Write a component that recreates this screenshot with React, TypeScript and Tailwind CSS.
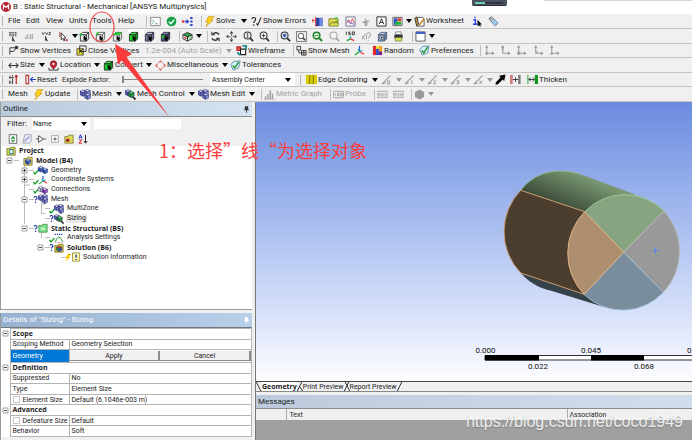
import type { ReactNode } from "react";
import clsx from "clsx";

/* ICONS – all drawn on a 12 x 12 grid */
const cube = (front: string, side: string, top: string, stroke = "#222") => (
  <g stroke={stroke} strokeWidth="0.9" strokeLinejoin="round">
    <path d="M1.5 4h6.5v7H1.5z" fill={front} />
    <path d="M1.5 4 4 1.5h6.5L8 4z" fill={top} />
    <path d="M8 4l2.5-2.5v7L8 11z" fill={side} />
  </g>
);

const pointer = <path d="M5 4.5v6l1.4-1.3 1 2 1-.5-.9-2h1.7z" fill="#000" />;

const hexCube = (x: number, y: number, top = "#c9cdf5", left = "#5b64c0", right = "#8f97e0") => (
  <g transform={`translate(${x} ${y})`} stroke="#23275e" strokeWidth="0.6" strokeLinejoin="round">
    <path d="M3.2 0 6.4 1.6 3.2 3.2 0 1.6z" fill={top} />
    <path d="M0 1.6 3.2 3.2v3.6L0 5.2z" fill={left} />
    <path d="M6.4 1.6 3.2 3.2v3.6l3.2-1.6z" fill={right} />
  </g>
);

const lens = (stroke: string, fill: string, mark?: ReactNode) => (
  <g fill="none" stroke={stroke}>
    <circle cx="5" cy="5" r="3.8" fill={fill} strokeWidth="1.1" />
    <path d="M7.8 7.8 11 11" strokeWidth="2" />
    {mark}
  </g>
);

const triad = (
  <g fill="none" strokeWidth="1.3">
    <path d="M6 7V1" stroke="#2c50d8" />
    <path d="M6 7l5 3" stroke="#e33" />
    <path d="M6 7l-5 4" stroke="#1aa832" />
    <path d="M4.5 4.5 6 7l3-1" stroke="#19a7b8" />
  </g>
);

const axis = (dot: ReactNode) => (
  <g fill="none" stroke="#9a9a9a" strokeWidth="1.1">
    <path d="M3 1.5V9h7M1.7 3 3 1.2 4.3 3M8.7 7.6 10.6 9l-1.9 1.4" />
    {dot}
  </g>
);

const edge = (mark: string) => (
  <g fill="none" stroke="#9b9b9b" strokeWidth="1.2">
    <path d="M1 11 10.5 1.5M1 11l4-1.4" />
    <path d={mark} strokeWidth="1" />
  </g>
);

const folder = (fill: string) => (
  <path d="M1 3h3.5l1-1.5H11V11H1z" fill={fill} stroke="#6b6420" strokeWidth="0.8" />
);

const icons: Record<string, ReactNode> = {
  console: (
    <g fill="none" stroke="#777" strokeWidth="0.9">
      <path d="M.8 1.5h10.4v9H.8z" fill="#fff" />
      <path d="M2.5 4 4.5 6l-2 2M5.5 8.5h3" stroke="#2a8a8a" />
    </g>
  ),
  check: (
    <g>
      <circle cx="6" cy="6" r="5.3" fill="#17a24a" />
      <path d="M3.2 6.2 5.3 8.3 9 4" fill="none" stroke="#fff" strokeWidth="1.6" />
    </g>
  ),
  arrows: (
    <g fill="#2743d2">
      <path d="M0 4.800h2.500v2.400H0z" fill="#d22" />
      <path d="M3 5.300h2V3.200L8 6 5 8.800V6.700H3z" />
      <path d="M9 1h2.500v2.200H9zM9 4.900h2.500v2.200H9zM9 8.800h2.500V11H9z" />
    </g>
  ),
  bolt: <path d="M5 .5h6L7.5 4.4H10L2 11.6l2.3-5H1.8z" fill="#ffd21c" stroke="#b88a00" strokeWidth="0.6" />,
  errors: (
    <g fill="none" stroke="#222" strokeWidth="1.2">
      <path d="M1 3.5C1 1 5 1 5 3.5 5 5.5 3 5.5 3 7.5M3 9v1.5M6 8l1.3 2L11 1.5" />
    </g>
  ),
  section: (
    <g>
      <path d="M4 2h7.5v9H4z" fill="#2742a6" />
      <path d="M8 2h3.5v9H8z" fill="#6f8be0" />
      <path d="M4 1v10.5M1 3v4M0 5h3" stroke="#d33" strokeWidth="1" />
    </g>
  ),
  image: (
    <g>
      <path d="M1 3h10v8H1z" fill="#e9e04c" stroke="#5c6b26" strokeWidth="0.8" />
      <path d="M2 9.5 5 6l2 2 2-2.5 1.5 3" fill="none" stroke="#3a5a2a" />
      <circle cx="9" cy="2.8" r="1.8" fill="#6bc04a" />
    </g>
  ),
  chart: (
    <g fill="none" strokeWidth="0.9">
      <path d="M1 1h10v10H1z" fill="#f7f7ff" stroke="#667" />
      <path d="M2 8 4 4l2 4 2-5 2 5" stroke="#d44" />
      <path d="M2 4.5l3 3L10 9" stroke="#4468d8" />
    </g>
  ),
  spark: <path d="M6 2 7 5h4L8 7v4H5V8L1.5 7 5 5.5z" fill="#a4a4a4" />,
  letter: (
    <g fill="none" stroke="#222" strokeWidth="1">
      <path d="M1 1h10v10H1z" fill="#fff" />
      <path d="M3.5 9 6 3l2.5 6M4.5 7h3" />
    </g>
  ),
  picture: (
    <g>
      <path d="M1 1.5h10v9H1z" fill="#fff" stroke="#333" strokeWidth="0.8" />
      <path d="M2 2.5h4v7H2z" fill="#2c59d0" />
      <path d="M6 2.5h4v3H6z" fill="#e23a2a" />
      <path d="M4 6h6v3.5H3z" fill="#27b03a" />
    </g>
  ),
  worksheet: (
    <g fill="none" strokeWidth="1">
      <path d="M4 1.5h5.5l1.5 2V11H3z" fill="#fff" stroke="#555" />
      <path d="M.8 2.5 3 1l2 8-2 2z" fill="#c99a4a" stroke="#333" />
      <path d="M5.5 10 11 3" stroke="#c07a1a" strokeWidth="1.5" />
    </g>
  ),
  info: (
    <g>
      <path d="M1.5 4h2.2v5M1 9h4.5" fill="none" stroke="#2a3df0" strokeWidth="1.6" />
      <path d="M2.5.8h1.5v1.5H2.5z" fill="#2a3df0" />
      <path d="M6 4v7.2l1.7-1.5 1 2 1-.5-.9-2h2z" fill="#000" />
    </g>
  ),
  tag: (
    <g strokeWidth="0.8">
      <path d="M1 3 4 1l7 6.5L8 11z" fill="#9ccdf0" stroke="#667" />
      <path d="M1 3 4 1l2 2-2.8 2.6z" fill="#ddd" stroke="#777" />
      <circle cx="3" cy="3" r=".7" fill="#444" />
    </g>
  ),
  pickA: (
    <g fill="none" stroke="#333" strokeWidth="0.9">
      <path d="M1 2h9M1 4.5h9M2.5 1v5M5.5 1v5M8.5 1v5" strokeDasharray="1.4 .7" />
      <path d="M5 6v5l1.2-1 1 1.8" fill="#000" />
    </g>
  ),
  pickB: (
    <g fill="none" stroke="#aaa" strokeWidth="1">
      <path d="M1 8 4 4v5M1 8h3M6 5l4-1M7 3.5 6.5 9M9.5 3 9 9M6 7.5h4" />
    </g>
  ),
  pickC: (
    <g fill="none" stroke="#333" strokeWidth="0.9">
      <path d="M1 1.5 2.5 4 4 1.5M5 1.5 6.2 4 7.4 1.5M8.5 1.5h2L8.5 4h2" />
      <path d="M5 5.5v5l1.2-1 1 1.8" fill="#000" />
    </g>
  ),
  pickMode: (
    <g>
      <path d="M2 1v6" stroke="#c33" strokeWidth="1" />
      <path d="M3.500 2v7.500l1.700-1.400 1.200 2.600 1.100-.6-1.100-2.400h2.200z" fill="#fff" stroke="#222" strokeWidth="0.9" />
      <circle cx="9.5" cy="10" r="1.2" fill="#c33" />
    </g>
  ),
  cubeVertex: (
    <g>
      {cube("#ededed", "#ddd", "#fff")}
      <circle cx="1.8" cy="3.8" r="1.4" fill="#19c32d" />
      {pointer}
    </g>
  ),
  cubeEdge: (
    <g>
      {cube("#ededed", "#ddd", "#fff", "#555")}
      <path d="M1.5 4 4 1.5" stroke="#19c32d" strokeWidth="1.8" />
      {pointer}
    </g>
  ),
  cubeFace: (
    <g>
      {cube("#ededed", "#ddd", "#1fd52f", "#555")}
      <path d="M1 4 4 1.500h7L8.500 4z" fill="#1fd52f" />
      {pointer}
    </g>
  ),
  cubeBody: (
    <g>
      {cube("#18d52a", "#0c9c1b", "#35e646")}
      {pointer}
    </g>
  ),
  cubeNode: (
    <g>
      {cube("#8d93c8", "#656ba8", "#bcc0e6")}
      <path d="M1.5 6.5H8M1.5 9H8M4 4v7" stroke="#333" strokeWidth="0.5" />
      {pointer}
    </g>
  ),
  cubeElement: (
    <g>
      {cube("#50558a", "#3a3f70", "#7d84bb")}
      <path d="M2 4.5h3v3H2z" fill="#1cc52e" />
      {pointer}
    </g>
  ),
  cubeView: (
    <g strokeWidth="0.900" strokeLinejoin="round" stroke="#222">
      <path d="M1 4 6 1.500 11 4 6 6.500z" fill="#2ea445" />
      <path d="M1 4v4.500L6 11V6.500z" fill="#f4f4f4" />
      <path d="M11 4v4.500L6 11V6.500z" fill="#a5dfad" />
      <path d="M2.500 7 5 8.300" stroke="#c33" strokeWidth="1.600" />
    </g>
  ),
  rotate: (
    <g fill="none" stroke="#333" strokeWidth="1.5">
      <path d="M10 4A4.3 4.3 0 0 0 3 3.5M2 8a4.3 4.3 0 0 0 7 .5" />
      <path d="M2 .8v3.4h3.3M10 11.2V7.8H6.7" strokeWidth="1.1" />
    </g>
  ),
  pan: (
    <g fill="#333">
      <path d="M6 0 8 2.6H4zM6 12 4 9.4h4zM0 6l2.6-2v4zM12 6 9.4 8V4z" />
      <path d="M5.4 3.6h1.2v1.2H5.4zM5.4 7.2h1.2v1.2H5.4zM3.6 5.4h1.2v1.2H3.6zM7.2 5.4h1.2v1.2H7.2z" />
    </g>
  ),
  zoom: lens("#333", "#f8f8f8", <path d="M5 2.8v4.4M3.8 3.8 5 2.6l1.2 1.2M3.8 6.2 5 7.4l1.2-1.2" strokeWidth=".8" />),
  zoomIn: lens("#333", "#f8f8f8", <path d="M5 3v4M3 5h4" strokeWidth="1" />),
  zoomFit: lens("#333", "#c8d4e8", <circle cx="5" cy="5" r="1.6" fill="#3550a0" stroke="none" />),
  zoomBox: (
    <g>
      <path d="M.6.6h10.8v10.8H.6z" fill="none" stroke="#555" strokeWidth="0.8" />
      <g transform="translate(1.5 1.5) scale(.78)">{lens("#333", "#fff")}</g>
    </g>
  ),
  zoomPrev: (
    <g fill="none" stroke="#25822e">
      <circle cx="5" cy="5" r="3.600" fill="#e6ffe6" strokeWidth="1.700" />
      <path d="M7.800 7.800 11 11" strokeWidth="2.200" />
      <path d="M3 5h4" strokeWidth="1" />
    </g>
  ),
  zoomNext: lens("#a5a5a5", "#f4f4f4"),
  iso: (
    <g fill="none" strokeWidth="1">
      <path d="M1.5.8v3.4M5.8 1.2H4v1.3h1.8V4H3.8M8 1h2.2v3H8z" stroke="#222" strokeWidth="0.9" />
      <path d="M6 5.5v3" stroke="#19a7b8" strokeWidth="1.5" />
      <path d="M6 8.5 2 10.5" stroke="#1aa832" strokeWidth="1.5" />
      <path d="M6 8.5l4 2" stroke="#e33" strokeWidth="1.5" />
    </g>
  ),
  lookAt: (
    <g fill="none" stroke="#a5a5a5" strokeWidth="1.1">
      <path d="M1 9 5 3M1.5 5.5 4 9M6 3.5C8 1 11 2 10.5 4.5 10 6.5 8 6 8 8.5M8 10v1M6 4v5" />
    </g>
  ),
  eye: (
    <g>
      {cube("#8fa6d6", "#6f86bd", "#c5d2ee", "#456")}
      <circle cx="5.2" cy="7.4" r="2.2" fill="#fff" stroke="#223" strokeWidth="0.6" />
      <circle cx="5.2" cy="7.4" r="1" fill="#223" />
    </g>
  ),
  print: (
    <g>
      <path d="M3 1h6v3H3z" fill="#fff" stroke="#555" strokeWidth="0.7" />
      <path d="M1.5 4h9v4h-9z" fill="#333" />
      <path d="M2.5 7h7v4h-7z" fill="#d7e24a" stroke="#555" strokeWidth="0.6" />
    </g>
  ),
  window: (
    <g>
      <path d="M1 1h10v10H1z" fill="#fff" stroke="#444" strokeWidth="0.9" />
      <path d="M1 1h10v2.2H1z" fill="#3e5fc4" />
    </g>
  ),
  vertices: (
    <g fill="none" stroke="#333" strokeWidth="1">
      <path d="M2 10.5V3h7l-3 4H2" />
      <path d="M8 1.5h2.5V4H8z" fill="#333" />
    </g>
  ),
  closeVert: (
    <g>
      <path d="M1 4h7v7H1z" fill="#e8dc38" stroke="#333" strokeWidth="0.8" />
      <path d="M4 1h7v6H4z" fill="none" stroke="#333" strokeWidth="1" />
      <path d="M3 9l5-5M4 5l3 4" stroke="#222" />
    </g>
  ),
  wireframe: (
    <g fill="none" strokeWidth="1.2">
      <path d="M1 2h4v4H1z" stroke="#c22" fill="#d55" />
      <path d="M5 4.5h5.5v6H5z" stroke="#222" fill="#fff" />
      <path d="M7 1h4v4M1.5 8l3 3" stroke="#1b8c8c" strokeWidth="2" />
    </g>
  ),
  showMesh: (
    <g fill="none" stroke="#333" strokeWidth="1">
      <path d="M1 1.5h4v4H1zM6 6h5v5H6zM8.5 6v5M6 8.5h5M3 5.5v3h3" />
    </g>
  ),
  triad,
  random: (
    <g>
      <path d="M1 1h3.5v10H1z" fill="#e12a2a" />
      <path d="M4.5 4h3v7h-3z" fill="#2b46c8" />
      <path d="M7.5 1h3.5v6H7.5z" fill="#f1a31f" />
      <path d="M7.5 7h3.5v4H7.5z" fill="#7a1e8c" />
      <path d="M4.5 1h3v3h-3z" fill="#f4e22a" />
    </g>
  ),
  prefs: (
    <g fill="none">
      <path d="M4 1.5 11 1 9.5 8.5 3.5 11 .8 5z" fill="#dbeefa" stroke="#5d8cab" strokeWidth="1" />
      <path d="M3 6l2.2 2.5L9.5 2" stroke="#1f9a35" strokeWidth="1.6" />
    </g>
  ),
  axis1: axis(<circle cx="3" cy="9" r="1.2" />),
  axis2: axis(<path d="M3 1v5" strokeWidth="1.8" />),
  axis3: axis(<path d="M2 8h2v2H2z" fill="#9a9a9a" />),
  axis4: axis(<path d="M3 9l2-2" />),
  axis5: axis(<path d="M1.5 9.5h3" strokeWidth="1.8" />),
  size: <path d="M1 6h10M3.500 3.500 1 6l2.500 2.500M8.500 3.500 11 6 8.500 8.500" fill="none" stroke="#333" strokeWidth="1.1" />,
  location: (
    <g>
      <path d="M6 .8a3.600 3.600 0 0 1 3.500 3.600C9.500 7 6 10 6 10S2.500 7 2.500 4.400A3.600 3.600 0 0 1 6 .8z" fill="#c62335" stroke="#5a0d17" strokeWidth="0.7" />
      <circle cx="6" cy="4.300" r="1.200" fill="#fff" />
      <path d="M1 8.500v2.500h10V8.500" fill="none" stroke="#333" strokeWidth="1" />
    </g>
  ),
  misc: (
    <g fill="none" stroke="#e05a5a" strokeWidth="1.200">
      <path d="M4.500 2.500 6 1l1.500 1.500M9.500 4.500 11 6 9.500 7.500M7.500 9.500 6 11l-1.500-1.500M2.500 7.500 1 6l1.500-1.500" />
      <path d="M2.500 4.500 4 3M8 3l1.500 1.500M9.500 7.500 8 9M4 9 2.500 7.500" strokeWidth=".8" />
    </g>
  ),
  explode: (
    <g fill="none" strokeWidth="1">
      <path d="M2 2v3M2 7v4M5 1v2M5 5v6M1 4h5M4 9H1" stroke="#555" strokeWidth="1.200" />
      <path d="M9 11V2M7.500 3.500 9 1.500l1.500 2" stroke="#b22" strokeWidth="1.300" />
    </g>
  ),
  reset: (
    <g fill="none" strokeWidth="1.200">
      <path d="M1 1.500h3v9H1z" stroke="#b33" />
      <path d="M12 6H6M8.500 3.500 6 6l2.500 2.500" stroke="#2846c8" />
    </g>
  ),
  edgeColor: (
    <g>
      <path d="M0 1h12v10H0z" fill="#d6ca00" />
      <path d="M4 1v10M8 1v10" stroke="#8f8700" strokeWidth="1.300" />
    </g>
  ),
  edge0: edge("M7 7.500h2.500V11H7z"),
  edge1: edge("M8.500 7v4"),
  edge2: edge("M7 7.500h2.500L7 10.700h3"),
  edge3: edge("M7 7.300h2.500v3.500H7M7.500 9h2"),
  edgeX: edge("M7 7l3 4M10 7l-3 4"),
  arrowBlack: <path d="M11.500.5 10 7.500 8.300 6 3 11.500.5 11.500 1 9 6 3.700 4.500 2z" fill="#000" />,
  gapRed: (
    <g>
      <path d="M0 1h3v10H0z" fill="#cf7f7f" />
      <path d="M9 1h2.500v10H9z" fill="#777" />
      <path d="M3 6h6M6 3.500v5" stroke="#333" />
    </g>
  ),
  thicken: (
    <g>
      <path d="M1 1v10" stroke="#18a02b" strokeWidth="1" />
      <path d="M8.500 1H12v10H8.500z" fill="#0f9a1f" />
      <path d="M2 6h6M4 4 2 6l2 2M6.500 4l2 2-2 2" fill="none" stroke="#222" strokeWidth=".9" />
    </g>
  ),
  cubes: (
    <g>
      {hexCube(0, 1)}
      {hexCube(4.800, 0.300)}
      {hexCube(5.200, 4.500)}
    </g>
  ),
  meshGreen: (
    <g>
      {hexCube(0, 0.500)}
      {hexCube(3.500, 2.500, "#5fe06b", "#129421", "#23b533")}
      <path d="M8.500 8.500 11.500 11.500" stroke="#222" strokeWidth="1.800" />
    </g>
  ),
  graph: (
    <g fill="#a0a0a0">
      <path d="M0 10.500h12v1H0zM1 8h1.500v2.500H1zM3.500 5.500H5v5H3.500zM6 1.500h1.700v9H6zM8.500 5H10v5.500H8.500z" />
    </g>
  ),
  probe: (
    <g fill="none" stroke="#a0a0a0" strokeWidth="1">
      <path d="M1 2.500h10a1 1 0 0 1 .5 1v5a1 1 0 0 1-.5 1H1a1 1 0 0 1-.5-1v-5a1 1 0 0 1 .5-1z" />
      <path d="M2.500 4.500v3M5 4.500h1.500v3H5zM8.500 4.500H10v3H8.500z" />
    </g>
  ),
  max: (
    <g fill="none" stroke="#a0a0a0" strokeWidth="1">
      <path d="M0 2.500h12v6.500H0z" />
      <path d="M1.500 7.500v-3l1 1.500 1-1.500v3M5 7.500 6 4.300l1 3.200M8.500 4.500l2 3M10.500 4.500l-2 3" strokeWidth=".9" />
    </g>
  ),
  min: (
    <g fill="none" stroke="#a0a0a0" strokeWidth="1">
      <path d="M0 2.500h12v6.500H0z" />
      <path d="M1.500 7.500v-3l1 1.500 1-1.500v3M5.800 4.300v3.200M7.800 7.500v-3l2.200 3v-3" strokeWidth=".9" />
    </g>
  ),
  hex: <path d="M6 .5 11 3.200v5.600L6 11.500 1 8.800V3.200z" fill="#999" />,
  refresh: (
    <g fill="none" strokeWidth="1">
      <path d="M1.500.8h9v10.400h-9z" fill="#fff" stroke="#555" />
      <path d="M4 5.500 6 3.200l2 2.300M6 3.500V6M8 7 6 9.200 4 7" stroke="#1f9a35" strokeWidth="1.300" />
    </g>
  ),
  note: (
    <g fill="none" strokeWidth="1">
      <path d="M3.500.8h7.500v8L8.500 11H1z" fill="#eef" stroke="#99a" />
      <path d="M3 9 9 3" stroke="#8893c8" strokeWidth="1.500" />
    </g>
  ),
  branch: (
    <g fill="none" stroke="#444" strokeWidth="1">
      <path d="M0 6h3M3 2l6 4-6 4zM9 6h3" />
    </g>
  ),
  plus: (
    <g fill="none" stroke="#999" strokeWidth="1">
      <path d="M2 2h8v8H2z" fill="#fff" />
      <path d="M6 4v4M4 6h4" stroke="#444" />
    </g>
  ),
  folderRed: (
    <g>
      {folder("#dcd65c")}
      <circle cx="4.500" cy="7.500" r="2.200" fill="#a52222" />
    </g>
  ),
  sort: (
    <g fill="none" strokeWidth="1.200">
      <path d="M1 5.500 3 .8l2 4.700M1.700 4h2.600" stroke="#2742d0" />
      <path d="M1.200 7h3.500L1.200 11h3.700" stroke="#c22" />
      <path d="M9 1v9.500M7 8.500 9 11l2-2.500" stroke="#222" />
    </g>
  ),
  project: (
    <g>
      {folder("#d8cf4e")}
      <path d="M4 3.500h5V10H4z" fill="#2d8b8b" />
      <path d="M5 5h3v3.500H5z" fill="#fff" />
    </g>
  ),
  model: (
    <g>
      {folder("#e0d660")}
      {hexCube(2.800, 3.300, "#b8d4ff", "#2454b8", "#4d80dc")}
    </g>
  ),
  geometry: (
    <g>
      {hexCube(0, 1.500, "#b8d4ff", "#2454b8", "#4d80dc")}
      {hexCube(5.200, 3.500, "#b8d4ff", "#2454b8", "#4d80dc")}
    </g>
  ),
  connections: (
    <g>
      {hexCube(0, 1.500, "#fff", "#ddd", "#eee")}
      {hexCube(5, 3.500, "#f3d8f8", "#8e2aa8", "#c05ad6")}
    </g>
  ),
  structural: (
    <g>
      <path d="M1 3h3.500l1-1.500H11V11H1z" fill="#7fe08b" stroke="#2b7a35" strokeWidth="0.800" />
      <path d="M3.500 7h5" stroke="#fff" strokeWidth="1.300" />
    </g>
  ),
  analysis: (
    <g fill="none" strokeWidth="1">
      <path d="M1 1.500h10" stroke="#2a46c8" strokeDasharray="1.500 1" strokeWidth="1.500" />
      <path d="M1 10.500C3 10.500 3 5 6 5s3 5.500 5 5.500" stroke="#2a9a50" strokeWidth="1.200" />
      <path d="M1 11.500h10" stroke="#d55" strokeDasharray="1 1" />
    </g>
  ),
  solution: (
    <g>
      {folder("#e0c840")}
      {hexCube(3, 3.500, "#e33", "#1f9a35", "#2a52d0")}
    </g>
  ),
  solInfo: (
    <g>
      <path d="M3 1h8.500v10H3z" fill="#fff6a8" stroke="#7a6f20" strokeWidth="0.800" />
      <path d="M7.300 3v4M7.300 8.300v1.300" stroke="#2438c8" strokeWidth="1.600" />
    </g>
  ),
};

function Icon({ name, className = "size-[11px]" }: { name: string; className?: string }) {
  return (
    <svg viewBox="0 0 12 12" className={clsx("shrink-0", className)} aria-hidden="true">
      {icons[name]}
    </svg>
  );
}

function Caret({ dim = false }: { dim?: boolean }) {
  return (
    <svg viewBox="0 0 6 4" className={clsx("h-[4px] w-[6px] shrink-0", dim ? "fill-[#999]" : "fill-black")} aria-hidden="true">
      <path d="M0 0h6L3 4z" />
    </svg>
  );
}

/* TOOLBARS */
type Tool = {
  w: string;
  icon?: string;
  label?: string;
  caret?: boolean;
  dim?: boolean;
  sep?: boolean;
  on?: boolean;
};

const menuRow: Tool[] = [
  { w: "w-[18px]", label: "File" },
  { w: "w-[20px]", label: "Edit" },
  { w: "w-[23px]", label: "View" },
  { w: "w-[23px]", label: "Units" },
  { w: "w-[26px]", label: "Tools" },
  { w: "w-[24px]", label: "Help" },
  { w: "w-[8px]", sep: true },
  { w: "w-[16px]", icon: "console" },
  { w: "w-[16px]", icon: "check" },
  { w: "w-[16px]", icon: "arrows" },
  { w: "w-[6px]", sep: true },
  { w: "w-[47px]", icon: "bolt", label: "Solve", caret: true },
  { w: "w-[61px]", icon: "errors", label: "Show Errors" },
  { w: "w-[16px]", icon: "section" },
  { w: "w-[17px]", icon: "image" },
  { w: "w-[15px]", icon: "chart" },
  { w: "w-[16px]", icon: "spark" },
  { w: "w-[16px]", icon: "letter" },
  { w: "w-[22px]", icon: "picture", caret: true },
  { w: "w-[58px]", icon: "worksheet", label: "Worksheet" },
  { w: "w-[16px]", icon: "info" },
  { w: "w-[16px]", icon: "tag" },
];

const selectRow: Tool[] = [
  { w: "w-[16px]", icon: "pickA" },
  { w: "w-[17px]", icon: "pickB" },
  { w: "w-[17px]", icon: "pickC" },
  { w: "w-[21px]", icon: "pickMode", caret: true },
  { w: "w-[16px]", icon: "cubeVertex" },
  { w: "w-[17px]", icon: "cubeEdge" },
  { w: "w-[16px]", icon: "cubeFace" },
  { w: "w-[16px]", icon: "cubeBody", on: true },
  { w: "w-[16px]", icon: "cubeNode" },
  { w: "w-[16px]", icon: "cubeElement" },
  { w: "w-[6px]", sep: true },
  { w: "w-[22px]", icon: "cubeView", caret: true },
  { w: "w-[6px]", sep: true },
  { w: "w-[16px]", icon: "rotate" },
  { w: "w-[17px]", icon: "pan" },
  { w: "w-[16px]", icon: "zoom" },
  { w: "w-[15px]", icon: "zoomIn" },
  { w: "w-[6px]", sep: true },
  { w: "w-[16px]", icon: "zoomFit" },
  { w: "w-[16px]", icon: "zoomBox" },
  { w: "w-[17px]", icon: "zoomPrev" },
  { w: "w-[16px]", icon: "zoomNext" },
  { w: "w-[16px]", icon: "iso" },
  { w: "w-[16px]", icon: "lookAt" },
  { w: "w-[16px]", icon: "eye" },
  { w: "w-[16px]", icon: "print" },
  { w: "w-[6px]", sep: true },
  { w: "w-[22px]", icon: "window", caret: true },
];

const vertexRow: Tool[] = [
  { w: "w-[68px]", icon: "vertices", label: "Show Vertices" },
  { w: "w-[69px]", icon: "closeVert", label: "Close Vertices" },
  { w: "w-[91px]", label: "1.2e-004 (Auto Scale)", caret: true, dim: true },
  { w: "w-[54px]", icon: "wireframe", label: "Wireframe" },
  { w: "w-[6px]", sep: true },
  { w: "w-[58px]", icon: "showMesh", label: "Show Mesh" },
  { w: "w-[18px]", icon: "triad" },
  { w: "w-[47px]", icon: "random", label: "Random" },
  { w: "w-[58px]", icon: "prefs", label: "Preferences" },
  { w: "w-[7px]", sep: true },
  { w: "w-[16px]", icon: "axis1" },
  { w: "w-[16px]", icon: "axis2" },
  { w: "w-[17px]", icon: "axis3" },
  { w: "w-[16px]", icon: "axis4" },
  { w: "w-[16px]", icon: "axis5" },
];

const sizeRow: Tool[] = [
  { w: "w-[40px]", icon: "size", label: "Size", caret: true },
  { w: "w-[55px]", icon: "location", label: "Location", caret: true },
  { w: "w-[52px]", icon: "cubeBody", label: "Convert", caret: true },
  { w: "w-[75px]", icon: "misc", label: "Miscellaneous", caret: true },
  { w: "w-[54px]", icon: "prefs", label: "Tolerances" },
];

const edgeRow: Tool[] = [
  { w: "w-[75px]", icon: "edgeColor", label: "Edge Coloring", caret: true },
  { w: "w-[23px]", icon: "edge0", caret: true, dim: true },
  { w: "w-[23px]", icon: "edge1", caret: true, dim: true },
  { w: "w-[23px]", icon: "edge2", caret: true, dim: true },
  { w: "w-[23px]", icon: "edge3", caret: true, dim: true },
  { w: "w-[22px]", icon: "edgeX", caret: true, dim: true },
  { w: "w-[15px]", icon: "arrowBlack" },
  { w: "w-[17px]", icon: "gapRed" },
  { w: "w-[40px]", icon: "thicken", label: "Thicken" },
];

const meshRow: Tool[] = [
  { w: "w-[25px]", label: "Mesh" },
  { w: "w-[41px]", icon: "bolt", label: "Update" },
  { w: "w-[6px]", sep: true },
  { w: "w-[45px]", icon: "cubes", label: "Mesh", caret: true },
  { w: "w-[73px]", icon: "meshGreen", label: "Mesh Control", caret: true },
  { w: "w-[60px]", icon: "cubes", label: "Mesh Edit", caret: true },
  { w: "w-[6px]", sep: true },
  { w: "w-[63px]", icon: "graph", label: "Metric Graph", dim: true },
  { w: "w-[6px]", sep: true },
  { w: "w-[38px]", icon: "probe", label: "Probe", dim: true },
  { w: "w-[6px]", sep: true },
  { w: "w-[16px]", icon: "max", dim: true },
  { w: "w-[15px]", icon: "min", dim: true },
  { w: "w-[6px]", sep: true },
  { w: "w-[22px]", icon: "hex", caret: true, dim: true },
];

function Tools({ items }: { items: Tool[] }) {
  return (
    <>
      {items.map((t, i) =>
        t.sep ? (
          <span key={i} className={clsx("flex h-[11px] shrink-0 justify-center", t.w)}>
            <span className="w-px bg-[#bdbdbd]" />
          </span>
        ) : (
          <button
            key={i}
            type="button"
            aria-label={t.label ?? t.icon}
            className={clsx(
              "flex h-full shrink-0 items-center gap-px whitespace-nowrap",
              t.w,
              t.dim && "text-[#a0a0a0]",
              t.on && "bg-white/80",
            )}
          >
            {t.icon && <Icon name={t.icon} />}
            {t.label && <span>{t.label}</span>}
            {t.caret && (
              <span className="flex flex-1 justify-center">
                <Caret dim={t.dim} />
              </span>
            )}
          </button>
        ),
      )}
    </>
  );
}

function Bar({ h, children }: { h: string; children: ReactNode }) {
  return (
    <div className={clsx("flex items-center overflow-hidden border-b border-[#c4c4c4] bg-[#f0f0f0]", h)}>
      <span className="mr-[5px] ml-[2px] h-[10px] w-px shrink-0 bg-[#b5b5b5]" />
      {children}
    </div>
  );
}

function Pin({ className }: { className: string }) {
  return (
    <svg viewBox="0 0 6 8" className={clsx("h-[7px] w-[5px]", className)} aria-hidden="true">
      <path d="M1 0h4v4h1v1H0V4h1zM2.500 5h1v3h-1z" />
    </svg>
  );
}

/* OUTLINE TREE */
type Node = {
  label: string;
  icon: string;
  indent: string;
  box?: "+" | "-";
  mark?: "check" | "query" | "bolt";
  bold?: boolean;
  selected?: boolean;
};

const tree: Node[] = [
  { label: "Project", icon: "project", indent: "pl-[5px]", bold: true },
  { label: "Model (B4)", icon: "model", indent: "pl-[5px]", box: "-", bold: true },
  { label: "Geometry", icon: "geometry", indent: "pl-[20px]", box: "+", mark: "check" },
  { label: "Coordinate Systems", icon: "triad", indent: "pl-[20px]", box: "+", mark: "check" },
  { label: "Connections", icon: "connections", indent: "pl-[28px]", mark: "check" },
  { label: "Mesh", icon: "cubes", indent: "pl-[20px]", box: "-", mark: "query" },
  { label: "MultiZone", icon: "cubes", indent: "pl-[44px]", mark: "check" },
  { label: "Sizing", icon: "meshGreen", indent: "pl-[44px]", mark: "query", selected: true },
  { label: "Static Structural (B5)", icon: "structural", indent: "pl-[20px]", box: "-", mark: "query", bold: true },
  { label: "Analysis Settings", icon: "analysis", indent: "pl-[44px]", mark: "check" },
  { label: "Solution (B6)", icon: "solution", indent: "pl-[36px]", box: "-", mark: "query", bold: true },
  { label: "Solution Information", icon: "solInfo", indent: "pl-[60px]", mark: "bolt" },
];

function TreeRow({ node }: { node: Node }) {
  return (
    <li className={clsx("flex min-h-0 items-center", node.indent)}>
      {node.box && (
        <svg viewBox="0 0 7 7" className="mr-px size-[7px] shrink-0" aria-hidden="true">
          <path d="M1 1h5v5H1z" fill="#fff" stroke="#888" strokeWidth="0.800" />
          <path d={node.box === "+" ? "M3.500 2v3M2 3.500h3" : "M2 3.500h3"} stroke="#222" strokeWidth="0.800" />
        </svg>
      )}
      {node.label !== "Project" && <span className="h-px w-[5px] shrink-0 bg-[#bbb]" />}
      {node.mark && (
        <svg viewBox="0 0 4 8" className="h-[8px] w-[4px] shrink-0 overflow-visible" aria-hidden="true">
          {node.mark === "check" && <path d="M-.5 6l1.500 2L4.500 4" fill="none" stroke="#19a12e" strokeWidth="1.300" />}
          {node.mark === "query" && (
            <path d="M0 2.500C.5 1 3 1.200 3 3c0 1-1.500 1.200-1.500 2.500M1.500 6.700v1.300" fill="none" stroke="#2438a8" strokeWidth="1.200" />
          )}
          {node.mark === "bolt" && <path d="M2 1h3L3 4h1.500L-1 8.500 1 5H-.5z" fill="#ffc400" />}
        </svg>
      )}
      {node.label === "Model (B4)" && <span className="w-[4px] shrink-0" />}
      <Icon name={node.icon} className="size-[10px]" />
      <span
        className={clsx(
          "ml-[2px] px-px whitespace-nowrap",
          node.bold && "font-['Open_Sans',sans-serif] font-bold",
          node.selected && "bg-[#e9e9e9]",
        )}
      >
        {node.label}
      </span>
    </li>
  );
}

/* DETAILS TABLE */
type Detail = { label: string; value?: string; head?: boolean; check?: boolean; active?: boolean };

const details: Detail[] = [
  { label: "Scope", head: true },
  { label: "Scoping Method", value: "Geometry Selection" },
  { label: "Geometry", active: true },
  { label: "Definition", head: true },
  { label: "Suppressed", value: "No" },
  { label: "Type", value: "Element Size" },
  { label: "Element Size", value: "Default (6.1046e-003 m)", check: true },
  { label: "Advanced", head: true },
  { label: "Defeature Size", value: "Default", check: true },
  { label: "Behavior", value: "Soft" },
];

function DetailsTable() {
  return (
    <table className="h-[109px] w-full table-fixed border-collapse bg-white text-[7px] leading-[8px]">
      <colgroup>
        <col className="w-[9px]" />
        <col className="w-[59px]" />
        <col />
      </colgroup>
      <tbody>
        {details.map((d) => (
          <tr key={d.label}>
            <td className="p-0">
              {d.head && (
                <svg viewBox="0 0 7 7" className="ml-px size-[7px]" aria-hidden="true">
                  <path d="M1 1h5v5H1z" fill="#fff" stroke="#888" strokeWidth="0.800" />
                  <path d="M2 3.500h3" stroke="#222" strokeWidth="0.800" />
                </svg>
              )}
            </td>
            {d.head ? (
              <th colSpan={2} className="border border-[#b4b4b4] p-0 pl-[2px] text-left font-['Open_Sans',sans-serif] font-bold">
                {d.label}
              </th>
            ) : (
              <>
                <td
                  className={clsx(
                    "border border-[#b4b4b4] p-0 pl-[2px] whitespace-nowrap",
                    d.active && "bg-[#0078d7] text-white",
                  )}
                >
                  {d.check ? (
                    <label className="flex items-center gap-[3px]">
                      <input type="checkbox" className="size-[7px] shrink-0 appearance-none border border-[#c8c8c8] bg-white" />
                      {d.label}
                    </label>
                  ) : (
                    d.label
                  )}
                </td>
                <td className={clsx("border border-[#b4b4b4] p-0", !d.active && "pl-[2px]")}>
                  {d.active ? (
                    <div className="grid grid-cols-2">
                      <button type="button" className="h-[10px] border-r-2 border-b border-[#8c8c8c] bg-[#f0f0f0]">
                        Apply
                      </button>
                      <button type="button" className="h-[10px] border-r-2 border-b border-[#8c8c8c] bg-[#f0f0f0]">
                        Cancel
                      </button>
                    </div>
                  ) : (
                    d.value
                  )}
                </td>
              </>
            )}
          </tr>
        ))}
      </tbody>
    </table>
  );
}

/* 3D MODEL + RULER */
function Viewport() {
  return (
    <svg viewBox="255 102 437 279" className="block h-[279px] w-[437px] max-w-none shrink-0" role="img" aria-label="Cylinder geometry">
      <defs>
        <linearGradient id="topSide" x1="575" y1="172" x2="560" y2="208" gradientUnits="userSpaceOnUse">
          <stop offset="0" stopColor="#7a9872" />
          <stop offset="1" stopColor="#3a4a38" />
        </linearGradient>
      </defs>
      <path d="M519.700 190.300C537 168 562 169 579 174L634 194.500 622 210 583.700 211.700z" fill="url(#topSide)" />
      <path d="M519.700 273C532 286 540 288 551 291L603 307 583 294z" fill="#35424a" />
      <path d="M519.700 190.300A56.500 58.300 0 0 0 519.700 273L583 294.300 583.700 211.700z" fill="#4c3e2f" />
      <path d="M519.700 190.300A56.500 58.300 0 0 0 519.700 273L583 294.300M519.700 190.300 583.700 211.700" fill="none" stroke="#d9a271" strokeWidth="0.900" />
      <path d="M519.700 190.300C537 168 562 169 579 174" fill="none" stroke="#8fbb85" strokeWidth="0.900" />
      <g strokeWidth="0.900">
        <path d="M622.700 252.300 583.700 211.700A56.500 58.300 0 0 1 663 211z" fill="#88a380" stroke="#9fd097" />
        <path d="M622.700 252.300 663 211A56.500 58.300 0 0 1 662.300 292.300z" fill="#999" stroke="#b9bdb9" />
        <path d="M622.700 252.300 662.300 292.300A56.500 58.300 0 0 1 583 294.300z" fill="#7a8d9d" stroke="#9cc0d8" />
        <path d="M622.700 252.300 583 294.300A56.500 58.300 0 0 1 583.700 211.700z" fill="#ad8f70" stroke="#e8b684" />
      </g>
      <path d="M654.500 247v7M651 250.500h7" stroke="#5f84e6" strokeWidth="1" />
      <path d="M484 355.500h210v4.500H484z" fill="#fff" stroke="#333" strokeWidth="1" />
      <path d="M484 355h54v5.500h-54zM590 355h53v5.500h-53z" fill="#000" />
      <g fontSize="8" textAnchor="middle" fill="#111">
        <text x="484.500" y="353">0.000</text>
        <text x="590" y="353">0.045</text>
        <text x="696" y="353">0.090</text>
        <text x="537" y="369">0.022</text>
        <text x="643" y="369">0.068</text>
      </g>
    </svg>
  );
}

/* slanted edge between two sheet tabs */
function TabEdge({ d }: { d: string }) {
  return (
    <svg viewBox="0 0 6 10" className="h-full w-[6px] shrink-0" aria-hidden="true">
      <path d={d} fill="none" stroke="#222" strokeWidth="1" />
    </svg>
  );
}

export default function App() {
  return (
    <div className="relative overflow-hidden bg-[#f0f0f0] font-[Roboto,'Open_Sans',sans-serif] text-[8px] leading-[10px] text-[#1c1c1c]">
      {/* TITLE BAR */}
      <header className="flex h-[14px] items-center gap-[2px] bg-white pl-px">
        <svg viewBox="0 0 12 12" className="size-[10px]" aria-hidden="true">
          <circle cx="6" cy="6" r="6" fill="#b3202c" />
          <path d="M3 9V3.500l3 3 3-3V9" fill="none" stroke="#fff" strokeWidth="1.500" />
        </svg>
        <h1 className="whitespace-nowrap">B : Static Structural - Mechanical [ANSYS Multiphysics]</h1>
      </header>
      <div className="absolute top-0 left-[472px] flex h-[6px] w-[35px] items-center rounded-b-xs border-b border-[#2b303a] bg-[#4b5261] pl-[3px]">
        <span className="h-[2px] w-[10px] bg-[#69cfa6]" />
        <span className="h-[2px] w-[18px] bg-[#2f3543]" />
      </div>
      <div className="absolute top-0 right-0 left-[544px] h-px bg-[#d8d8d8]" />

      {/* TOOLBARS */}
      <nav>
        <Bar h="h-[15px]">
          <Tools items={menuRow} />
        </Bar>
        <Bar h="h-[15px]">
          <Tools items={selectRow} />
        </Bar>
        <Bar h="h-[14px]">
          <Tools items={vertexRow} />
        </Bar>
        <Bar h="h-[15px]">
          <Tools items={sizeRow} />
        </Bar>
        <Bar h="h-[14px]">
          <Tools
            items={[
              { w: "w-[17px]", icon: "explode" },
              { w: "w-[37px]", icon: "reset", label: "Reset" },
            ]}
          />
          <label className="flex shrink-0 items-center text-[7px]">
            <span className="w-[60px] whitespace-nowrap">Explode Factor:</span>
            <input
              type="range"
              defaultValue={0}
              className="h-[8px] w-[81px] appearance-none bg-[linear-gradient(#888,#888)] bg-[length:100%_1px] bg-center bg-no-repeat [&::-webkit-slider-thumb]:h-[7px] [&::-webkit-slider-thumb]:w-[2px] [&::-webkit-slider-thumb]:appearance-none [&::-webkit-slider-thumb]:bg-[#888]"
            />
          </label>
          <span className="ml-[7px] flex h-full w-[85px] shrink-0 items-center bg-white pr-[4px]">
            <select aria-label="Explode origin" className="min-w-0 flex-1 appearance-none pl-[2px] text-[7px]">
              <option>Assembly Center</option>
            </select>
            <Caret />
          </span>
          <span className="mr-[5px] ml-[5px] h-[10px] w-px shrink-0 bg-[#b5b5b5]" />
          <Tools items={edgeRow} />
        </Bar>
        <Bar h="h-[15px]">
          <Tools items={meshRow} />
        </Bar>
      </nav>

      <main className="flex h-[338px] min-w-0">
        {/* LEFT COLUMN */}
        <aside className="flex w-[252px] shrink-0 flex-col">
          <section className="flex flex-1 flex-col border-b border-l border-[#999] bg-white">
            <h2 className="flex h-[15px] items-center justify-between border-b border-[#8c8c8c] bg-linear-to-r from-[#b9cadc] to-[#d5e3f1] pr-[3px] pl-[2px]">
              Outline
              <Pin className="fill-[#333]" />
            </h2>
            <div className="flex h-[14px] items-center bg-[#f0f0f0] pl-[6px]">
              <label htmlFor="filter" className="w-[25px]">
                Filter:
              </label>
              <span className="mr-[4px] flex h-[12px] w-[58px] items-center bg-white pr-[3px]">
                <select id="filter" className="min-w-0 flex-1 appearance-none pl-px text-[7px]">
                  <option>Name</option>
                </select>
                <Caret />
              </span>
              <input aria-label="Filter text" className="h-[10px] w-[87px] bg-white" />
            </div>
            <div className="flex h-[15px] items-center gap-[4px] bg-[#f0f0f0] pl-[7px]">
              {["refresh", "note", "branch", "plus", "folderRed", "sort"].map((name) => (
                <button key={name} type="button" aria-label={name}>
                  <Icon name={name} className="size-[10px]" />
                </button>
              ))}
            </div>
            <div className="relative">
              {/* guide lines between parents and children */}
              <svg viewBox="0 0 80 116" className="absolute top-0 left-0 h-[116px] w-[80px]" aria-hidden="true">
                <path d="M23.500 19v59M40.500 53v14.500M40.500 82v10M40.500 58h4M40.500 67.500h4M24 39h5" stroke="#bbb" fill="none" />
              </svg>
              <ul className="relative grid h-[116px] auto-rows-fr text-[7px] leading-[9px]">
                {tree.map((node) => (
                  <TreeRow key={node.label} node={node} />
                ))}
              </ul>
            </div>
          </section>

          <section className="mt-[3px] flex h-[127px] flex-col border-l border-[#999] bg-[#f0f0f0]">
            <h2 className="flex h-[15px] shrink-0 items-center justify-between border-b border-[#777] bg-linear-to-r from-[#96b1d1] to-[#b9d0ea] pr-[3px] pl-[2px] text-white">
              Details of "Sizing" - Sizing
              <Pin className="fill-white" />
            </h2>
            <DetailsTable />
          </section>
        </aside>

        {/* GRAPHICS + MESSAGES */}
        <div className="ml-[3px] flex min-w-0 flex-1 flex-col border-l border-[#777]">
          <section className="h-[279px] overflow-hidden bg-linear-to-b from-[#6b8bdf] to-[#fdfdff]">
            <Viewport />
          </section>
          <div className="flex h-[11px] items-center border-t border-b border-t-[#444] border-b-[#888] text-[7px]">
            <TabEdge d="M0 0l5 10" />
            <button type="button" className="h-full bg-white font-['Open_Sans',sans-serif] font-bold">
              Geometry
            </button>
            <TabEdge d="M0 10 5 0M2.500 5 6 10" />
            <button type="button" className="whitespace-nowrap">
              Print Preview
            </button>
            <TabEdge d="M0 10 5 0M1 0l5 10" />
            <button type="button" className="whitespace-nowrap">
              Report Preview
            </button>
            <TabEdge d="M0 10 5 0" />
          </div>
          <section className="mt-[3px] flex flex-1 flex-col bg-[#a0a0a0]">
            <h2 className="flex h-[14px] items-center border-b border-[#8c8c8c] bg-linear-to-r from-[#bccadb] to-[#d0deec] pl-[2px]">
              Messages
            </h2>
            <table className="w-full table-fixed border-collapse">
              <thead>
                <tr className="h-[11px] bg-[#f0f0f0] text-left">
                  <th className="w-[30px] border-r border-[#aaa] p-0" />
                  <th className="w-[281px] border-r border-[#aaa] p-0 pl-[3px] text-[7px] font-normal">Text</th>
                  <th className="p-0 pl-[2px] text-[7px] font-normal">Association</th>
                </tr>
              </thead>
            </table>
          </section>
        </div>
      </main>

      {/* ANNOTATIONS – red callout over the toolbars */}
      <svg viewBox="0 0 180 125" className="pointer-events-none absolute top-0 left-0 h-[125px] w-[180px]" aria-hidden="true">
        <ellipse cx="102" cy="27" rx="12" ry="15" fill="none" stroke="#f04848" strokeWidth="1.200" />
        <path d="M115 44 132 54 126.500 57 170 118 121.500 60.500 118 65z" fill="#f83c3c" />
      </svg>
      <p className="pointer-events-none absolute top-[138px] left-[159px] font-['Noto_Sans_CJK_SC',sans-serif] text-[18px] leading-[24px] whitespace-nowrap text-[#fb3f3f]">
        1：选择”线“为选择对象
      </p>
      <p className="pointer-events-none absolute right-[9px] bottom-[9px] font-['Liberation_Sans',sans-serif] text-[16px] leading-[18px] whitespace-nowrap text-white/85 [text-shadow:0_1px_1px_rgba(90,90,90,0.5)]">
        https://blog.csdn.net/coco1949
      </p>
    </div>
  );
}
